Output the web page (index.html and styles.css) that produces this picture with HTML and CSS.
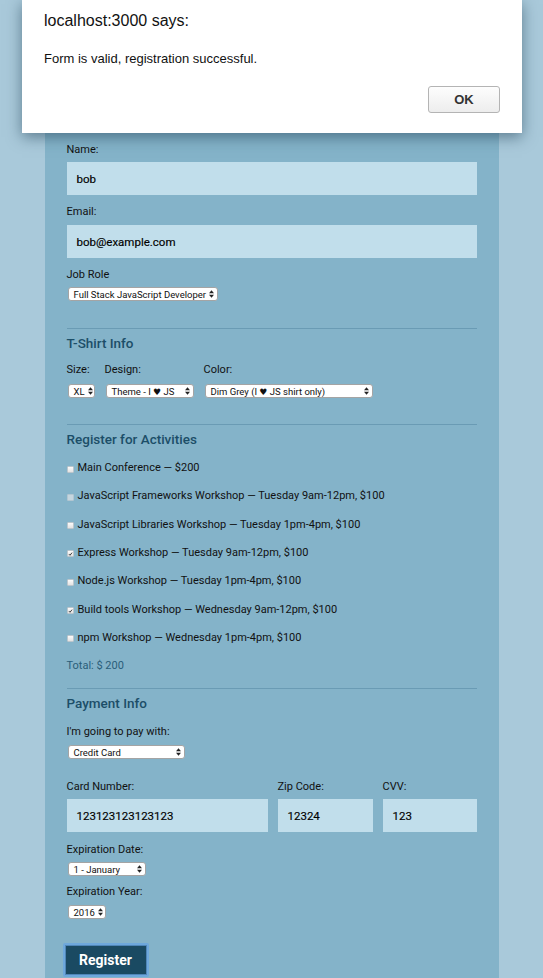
FILE: index.html
```html
<!DOCTYPE html>
<html lang="en">
<head>
<meta charset="utf-8">
<title>Registration</title>
<link rel="stylesheet" href="styles.css">
</head>
<body>
<div class="page">
  <form class="container">
    <div class="field">
      <label class="lbl">Name:</label>
      <div class="input">bob</div>
    </div>
    <div class="field">
      <label class="lbl">Email:</label>
      <div class="input">bob@example.com</div>
    </div>
    <div class="field">
      <label class="lbl">Job Role</label>
      <div class="sel sel-job"><span>Full Stack JavaScript Developer</span><svg class="arr" viewBox="0 0 6 9" width="5" height="8"><path d="M3 0 L6 3.5 H0 Z M3 9 L0 5.5 H6 Z" fill="#222"/></svg></div>
    </div>

    <section class="sect tshirt">
      <h2>T-Shirt Info</h2>
      <div class="tshirt-row">
        <div class="col">
          <label class="lbl">Size:</label>
          <div class="sel sel-size"><span>XL</span><svg class="arr" viewBox="0 0 6 9" width="5" height="8"><path d="M3 0 L6 3.5 H0 Z M3 9 L0 5.5 H6 Z" fill="#222"/></svg></div>
        </div>
        <div class="col">
          <label class="lbl">Design:</label>
          <div class="sel sel-design"><span>Theme - I <span class="heart">♥</span> JS</span><svg class="arr" viewBox="0 0 6 9" width="5" height="8"><path d="M3 0 L6 3.5 H0 Z M3 9 L0 5.5 H6 Z" fill="#222"/></svg></div>
        </div>
        <div class="col">
          <label class="lbl">Color:</label>
          <div class="sel sel-color"><span>Dim Grey (I <span class="heart">♥</span> JS shirt only)</span><svg class="arr" viewBox="0 0 6 9" width="5" height="8"><path d="M3 0 L6 3.5 H0 Z M3 9 L0 5.5 H6 Z" fill="#222"/></svg></div>
        </div>
      </div>
    </section>

    <section class="sect activities">
      <h2>Register for Activities</h2>
      <ul class="acts">
        <li><span class="cb"></span>Main Conference — $200</li>
        <li><span class="cb cb-dis"></span>JavaScript Frameworks Workshop — Tuesday 9am-12pm, $100</li>
        <li><span class="cb"></span>JavaScript Libraries Workshop — Tuesday 1pm-4pm, $100</li>
        <li><span class="cb on"><svg viewBox="0 0 8 8" width="6" height="6"><path d="M1.5 4.2 L3.2 6 L6.5 1.8" fill="none" stroke="#333" stroke-width="1.5"/></svg></span>Express Workshop — Tuesday 9am-12pm, $100</li>
        <li><span class="cb"></span>Node.js Workshop — Tuesday 1pm-4pm, $100</li>
        <li><span class="cb on"><svg viewBox="0 0 8 8" width="6" height="6"><path d="M1.5 4.2 L3.2 6 L6.5 1.8" fill="none" stroke="#333" stroke-width="1.5"/></svg></span>Build tools Workshop — Wednesday 9am-12pm, $100</li>
        <li><span class="cb"></span>npm Workshop — Wednesday 1pm-4pm, $100</li>
        <li class="total">Total: $ 200</li>
      </ul>
    </section>

    <section class="sect payment">
      <h2>Payment Info</h2>
      <label class="lbl lbl-pay">I'm going to pay with:</label>
      <div class="sel sel-pay"><span>Credit Card</span><svg class="arr" viewBox="0 0 6 9" width="5" height="8"><path d="M3 0 L6 3.5 H0 Z M3 9 L0 5.5 H6 Z" fill="#222"/></svg></div>
      <div class="card-row">
        <div class="col">
          <label class="lbl">Card Number:</label>
          <div class="input">123123123123123</div>
        </div>
        <div class="col">
          <label class="lbl">Zip Code:</label>
          <div class="input">12324</div>
        </div>
        <div class="col">
          <label class="lbl">CVV:</label>
          <div class="input">123</div>
        </div>
      </div>
      <label class="lbl lbl-month">Expiration Date:</label>
      <div class="sel sel-month"><span>1 - January</span><svg class="arr" viewBox="0 0 6 9" width="5" height="8"><path d="M3 0 L6 3.5 H0 Z M3 9 L0 5.5 H6 Z" fill="#222"/></svg></div>
      <label class="lbl lbl-year">Expiration Year:</label>
      <div class="sel sel-year"><span>2016</span><svg class="arr" viewBox="0 0 6 9" width="5" height="8"><path d="M3 0 L6 3.5 H0 Z M3 9 L0 5.5 H6 Z" fill="#222"/></svg></div>
    </section>

    <button type="button" class="register">Register</button>
  </form>
</div>

<div class="dialog">
  <div class="dlg-title">localhost:3000 says:</div>
  <div class="dlg-msg">Form is valid, registration successful.</div>
  <div class="dlg-actions"><button type="button" class="ok">OK</button></div>
</div>
</body>
</html>
```

FILE: styles.css
```css
* { box-sizing: border-box; }
html, body { margin: 0; padding: 0; }
body {
  background: #a9c9da;
  font-family: Roboto, "Liberation Sans", sans-serif;
  color: #111;
  height: 978px;
  overflow: hidden;
}
.page {
  display: flex;
  justify-content: center;
}
.container {
  width: 454px;
  background: #84b3c9;
  padding: 143px 22px 0 22px;
  height: 978px;
  display: flex;
  flex-direction: column;
  align-items: flex-start;
}
.field { width: 100%; display: flex; flex-direction: column; align-items: flex-start; }
.lbl {
  display: block;
  font-size: 11px;
  line-height: 14px;
  margin-bottom: 5px;
  color: #111;
}
.input {
  width: 100%;
  height: 33px;
  background: #c1deeb;
  padding: 0 10px;
  display: flex;
  align-items: center;
  font-size: 11.5px;
  font-weight: 400;
  color: #000;
  -webkit-text-stroke: 0.15px #000;
  margin-bottom: 10px;
}
.field:nth-child(2) .lbl { margin-bottom: 6px; }

.sel {
  display: inline-flex;
  align-items: center;
  justify-content: space-between;
  height: 14px;
  background: #fff;
  border: 1px solid #a4a4a4;
  border-radius: 3px;
  padding: 0 3px 0 5px;
  font-family: Roboto, "Liberation Sans", sans-serif;
  font-size: 9.5px;
  color: #111;
  margin-left: 1px;
  white-space: nowrap;
}
.sel .arr { flex: none; margin-left: 3px; }
.heart { font-family: "DejaVu Sans", sans-serif; font-size: 9px; }
.sel-job { width: 150px; }
.sel-size { width: 27px; padding-left: 5px; }
.sel-design { width: 88px; }
.sel-color { width: 168px; }
.sel-pay { width: 117px; }
.sel-month { width: 78px; }
.sel-year { width: 38px; padding-left: 5px; }

.sect {
  width: 100%;
  border-top: 1px solid #6a9bb4;
  margin-top: 27px;
  padding-top: 5px;
  display: flex;
  flex-direction: column;
  align-items: flex-start;
}
.sect h2 {
  margin: 0;
  font-size: 13.5px;
  line-height: 18px;
  font-weight: 500;
  color: #1c4e68;
}
.tshirt h2 { margin-bottom: 11px; }
.tshirt-row { display: flex; gap: 10px; }
.tshirt-row .col { display: flex; flex-direction: column; align-items: flex-start; }
.tshirt-row .lbl { margin-bottom: 7px; }
.activities { margin-top: 26px; }
.activities h2 { margin-bottom: 13px; }
.acts {
  list-style: none;
  margin: 0;
  padding: 0;
  display: flex;
  flex-direction: column;
  gap: 14.33px;
}
.acts li {
  display: flex;
  align-items: center;
  font-size: 11px;
  line-height: 14px;
  color: #111;
}
.acts li.total { color: #2a5e79; }
.cb {
  width: 7px;
  height: 7px;
  margin: 2px 4px 0 0;
  background: linear-gradient(#fbfbfb, #e2e2e2);
  border: 1px solid #bcc6cc;
  border-radius: 1px;
  display: inline-flex;
  align-items: center;
  justify-content: center;
  flex: none;
}
.cb svg { width: 6px; height: 6px; }
.cb-dis { background: #c5d6df; border-color: #b2c6d1; }

.payment { margin-top: 15px; }
.payment h2 { margin-bottom: 13px; }
.lbl-pay { margin-bottom: 6px; }
.payment .sel-pay { margin-bottom: 21px; }
.card-row {
  width: 100%;
  display: grid;
  grid-template-columns: 201px 95px 1fr;
  gap: 10px;
  margin-bottom: 11px;
}
.card-row .input { margin-bottom: 0; }
.lbl-month { margin-bottom: 5px; }
.sel-month { margin-bottom: 9px; }
.lbl-year { margin-bottom: 6px; }

.register {
  margin-top: 24px;
  margin-left: -4px;
  width: 86px;
  height: 34px;
  background: #1a4a62;
  color: #fff;
  font-family: Roboto, "Liberation Sans", sans-serif;
  font-weight: 700;
  font-size: 14px;
  border: 2px solid #6ea8dc;
  outline: none;
  border-radius: 2px;
  box-shadow: inset 0 0 0 1px #4f86b8;
  padding: 0;
}

.dialog {
  position: absolute;
  top: 0;
  left: 22px;
  width: 500px;
  height: 133px;
  background: #fff;
  box-shadow: 0 4px 14px rgba(30, 60, 80, 0.55);
  font-family: "Liberation Sans", Arial, sans-serif;
  padding: 11px 22px 0 22px;
  color: #111;
}
.dlg-title { font-size: 16px; line-height: 20px; }
.dlg-msg { font-size: 13px; line-height: 16px; margin-top: 20px; }
.dlg-actions { display: flex; justify-content: flex-end; margin-top: 19px; padding-right: 0; }
.ok {
  width: 72px;
  height: 27px;
  border: 1px solid #b4b4b4;
  border-radius: 3px;
  background: linear-gradient(#fdfdfd, #ededed);
  font-family: "Liberation Sans", Arial, sans-serif;
  font-weight: 700;
  font-size: 13px;
  color: #333;
  padding: 0;
}
```
